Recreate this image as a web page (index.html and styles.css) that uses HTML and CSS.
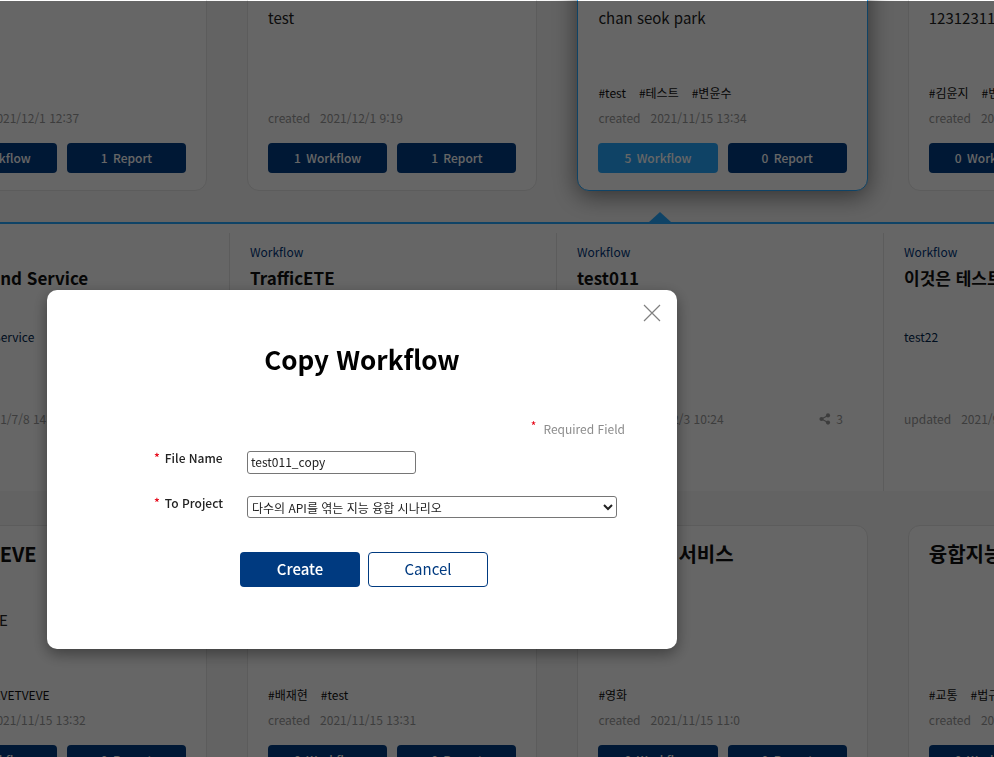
FILE: index.html
```html
<!DOCTYPE html>
<html lang="ko">
<head>
    <meta charset="UTF-8">
    <meta name="viewport" content="width=device-width, initial-scale=1.0">
    <title>Copy Workflow</title>
    <link rel="stylesheet" href="styles.css">
</head>
<body>

    <div class="page">
        <!-- first row of projects, scrolled past the top -->
        <div class="card-row card-row-top">
            <div class="card">
                <h3 class="card-title"></h3>
                <p class="card-desc">test1231</p>
                <div class="card-tags"></div>
                <p class="card-date"><span>created</span>2021/12/1 12:37</p>
                <div class="card-btns">
                    <a class="btn">1 Workflow</a>
                    <a class="btn">1 Report</a>
                </div>
            </div>
            <div class="card">
                <h3 class="card-title"></h3>
                <p class="card-desc">test</p>
                <div class="card-tags"></div>
                <p class="card-date"><span>created</span>2021/12/1 9:19</p>
                <div class="card-btns">
                    <a class="btn">1 Workflow</a>
                    <a class="btn">1 Report</a>
                </div>
            </div>
            <div class="card card-active">
                <h3 class="card-title"></h3>
                <p class="card-desc">chan seok park</p>
                <div class="card-tags"><span>#test</span><span>#테스트</span><span>#변윤수</span></div>
                <p class="card-date"><span>created</span>2021/11/15 13:34</p>
                <div class="card-btns">
                    <a class="btn btn-active">5 Workflow</a>
                    <a class="btn">0 Report</a>
                </div>
            </div>
            <div class="card">
                <h3 class="card-title"></h3>
                <p class="card-desc">12312311</p>
                <div class="card-tags"><span>#김윤지</span><span>#변윤수</span></div>
                <p class="card-date"><span>created</span>2021/11/15 13:30</p>
                <div class="card-btns">
                    <a class="btn">0 Workflow</a>
                    <a class="btn">0 Report</a>
                </div>
            </div>
        </div>

        <!-- workflows of the selected project -->
        <div class="panel">
            <div class="panel-arrow"></div>
            <div class="flow">
                <p class="flow-type">Workflow</p>
                <h3 class="flow-title">On Demand Service</h3>
                <p class="flow-desc">On Demand Service</p>
                <div class="flow-date"><p><span>updated</span>2021/7/8 14:20</p></div>
            </div>
            <div class="flow">
                <p class="flow-type">Workflow</p>
                <h3 class="flow-title">TrafficETE</h3>
                <p class="flow-desc"></p>
                <div class="flow-date"><p><span>updated</span>2021/7/8 14:20</p></div>
            </div>
            <div class="flow">
                <p class="flow-type">Workflow</p>
                <h3 class="flow-title">test011</h3>
                <p class="flow-desc"></p>
                <div class="flow-date">
                    <p><span>updated</span>2021/12/3 10:24</p>
                    <p class="flow-share">
                        <svg width="12" height="12" viewBox="0 0 12 12">
                            <path d="M2.5 6 9 2.5M2.5 6 9 9.5" stroke="currentColor" stroke-width="1.2" fill="none"/>
                            <circle cx="2.5" cy="6" r="2.1" fill="currentColor"/>
                            <circle cx="9" cy="2.4" r="2.1" fill="currentColor"/>
                            <circle cx="9" cy="9.6" r="2.1" fill="currentColor"/>
                        </svg>
                        3
                    </p>
                </div>
            </div>
            <div class="flow">
                <p class="flow-type">Workflow</p>
                <h3 class="flow-title">이것은 테스트 입니다</h3>
                <p class="flow-desc">test22</p>
                <div class="flow-date"><p><span>updated</span>2021/9/3 10:24</p></div>
            </div>
        </div>

        <!-- next row of projects -->
        <div class="card-row">
            <div class="card">
                <h3 class="card-title">TVETVEVE</h3>
                <p class="card-desc">TVETVEVE</p>
                <div class="card-tags"><span>#TVEVETVEVETVEVE</span></div>
                <p class="card-date"><span>created</span>2021/11/15 13:32</p>
                <div class="card-btns">
                    <a class="btn">0 Workflow</a>
                    <a class="btn">0 Report</a>
                </div>
            </div>
            <div class="card">
                <h3 class="card-title"></h3>
                <p class="card-desc"></p>
                <div class="card-tags"><span>#배재현</span><span>#test</span></div>
                <p class="card-date"><span>created</span>2021/11/15 13:31</p>
                <div class="card-btns">
                    <a class="btn">0 Workflow</a>
                    <a class="btn">0 Report</a>
                </div>
            </div>
            <div class="card">
                <h3 class="card-title card-title-end">서비스</h3>
                <p class="card-desc"></p>
                <div class="card-tags"><span>#영화</span></div>
                <p class="card-date"><span>created</span>2021/11/15 11:0</p>
                <div class="card-btns">
                    <a class="btn">0 Workflow</a>
                    <a class="btn">0 Report</a>
                </div>
            </div>
            <div class="card">
                <h3 class="card-title">융합지능 서비스</h3>
                <p class="card-desc"></p>
                <div class="card-tags"><span>#교통</span><span>#법규</span></div>
                <p class="card-date"><span>created</span>2021/11/15 11:0</p>
                <div class="card-btns">
                    <a class="btn">0 Workflow</a>
                    <a class="btn">0 Report</a>
                </div>
            </div>
        </div>
    </div>

    <div class="overlay"></div>

    <div class="modal">
        <button class="modal-close" type="button" aria-label="close">
            <svg width="18" height="18" viewBox="0 0 18 18">
                <path d="M1 1 17 17M17 1 1 17" stroke="#808080" stroke-width="1.2" fill="none"/>
            </svg>
        </button>
        <h2 class="modal-title">Copy Workflow</h2>
        <p class="required"><i>*</i>Required Field</p>
        <form class="modal-form">
            <div class="form-row">
                <label for="fileName"><i>*</i>File Name</label>
                <input type="text" id="fileName" value="test011_copy">
            </div>
            <div class="form-row">
                <label for="toProject"><i>*</i>To Project</label>
                <select id="toProject">
                    <option>다수의 API를 엮는 지능 융합 시나리오</option>
                </select>
            </div>
            <div class="modal-btns">
                <button type="button" class="btn-create">Create</button>
                <button type="button" class="btn-cancel">Cancel</button>
            </div>
        </form>
    </div>

</body>
</html>
```

FILE: styles.css
```css
* {
    box-sizing: border-box;
}
html, body {
    margin: 0;
    height: 757px;
    overflow: hidden;
}
body {
    font-family: "Noto Sans CJK KR", "Noto Sans", sans-serif;
    color: #222;
    background-color: #f8f8f8;
}
p, h2, h3 {
    margin: 0;
}
.page {
    width: 1400px;
}

/* project cards */
.card-row {
    display: flex;
    gap: 40px;
    margin-left: -83.4px;
}
.card-row-top {
    margin-top: -77px;
    margin-bottom: 31px;
}
.card {
    flex: 0 0 290.4px;
    height: 268px;
    padding: 0 20px;
    background-color: #fff;
    border: 1px solid #e6e6e6;
    border-radius: 12px;
}
.card-active {
    border-color: #26a9ff;
    box-shadow: 0 5px 25px rgba(0, 0, 0, 0.5);
}
.card-title {
    height: 82px;
    padding-top: 13px;
    font-size: 20px;
    line-height: 30px;
    font-weight: 700;
    white-space: nowrap;
    color: #111;
}
.card-title-end {
    margin-left: 80px;
}
.card-desc {
    height: 77px;
    font-size: 15px;
    line-height: 24px;
    color: #222;
    white-space: nowrap;
}
.card-tags {
    display: flex;
    gap: 13px;
    height: 22px;
    font-size: 12px;
    line-height: 20px;
    color: #111;
    white-space: nowrap;
}
.card-date {
    margin-top: 3px;
    height: 35px;
    font-size: 12px;
    line-height: 20px;
    color: #999;
    white-space: nowrap;
}
.card-date span, .flow-date span {
    margin-right: 10px;
}
.card-btns {
    display: flex;
    gap: 10px;
}
.btn {
    flex: 1;
    height: 30px;
    line-height: 30px;
    text-align: center;
    font-size: 12px;
    word-spacing: 2px;
    font-weight: 500;
    color: #fff;
    background-color: #003d85;
    border-radius: 4px;
}
.btn-active {
    background-color: #26a9ff;
}

/* workflow list under the selected card */
.panel {
    position: relative;
    display: flex;
    height: 269px;
    margin-bottom: 34px;
    margin-left: -97px;
    padding-top: 9px;
    background-color: #fff;
    border-top: 2px solid #26a9ff;
}
.panel-arrow {
    position: absolute;
    left: 746px;
    top: -12px;
    width: 0;
    height: 0;
    border-left: 11px solid transparent;
    border-right: 11px solid transparent;
    border-bottom: 10px solid #26a9ff;
}
.flow {
    flex: 0 0 327px;
    padding: 9px 21px 0 20px;
    border-right: 1px solid #e6e6e6;
}
.flow-type {
    height: 20px;
    font-size: 12px;
    line-height: 20px;
    color: #00367c;
}
.flow-title {
    margin-top: 3px;
    height: 30px;
    font-size: 17px;
    line-height: 26px;
    font-weight: 700;
    color: #111;
    white-space: nowrap;
}
.flow-desc {
    margin-top: 32px;
    height: 72px;
    font-size: 12px;
    line-height: 20px;
    color: #00264f;
    white-space: nowrap;
}
.flow-date {
    display: flex;
    justify-content: space-between;
    margin-top: 10px;
    padding-right: 19px;
    font-size: 12px;
    line-height: 20px;
    color: #999;
    white-space: nowrap;
}
.flow-share {
    display: flex;
    align-items: center;
    gap: 5px;
}

/* dim layer and dialog */
.overlay {
    position: fixed;
    inset: 1px 0 0 0;
    background-color: rgba(0, 0, 0, 0.6);
}
.modal {
    position: fixed;
    left: 47px;
    top: 290px;
    width: 630px;
    height: 359px;
    padding-top: 51px;
    background-color: #fff;
    border-radius: 10px;
    box-shadow: 0 5px 15px rgba(0, 0, 0, 0.4);
}
.modal-close {
    position: absolute;
    right: 16px;
    top: 14px;
    padding: 0;
    width: 18px;
    height: 18px;
    background: none;
    border: none;
}
.modal-title {
    text-align: center;
    font-size: 26px;
    line-height: 36px;
    font-weight: 700;
    color: #000;
}
.required {
    margin-top: 42px;
    padding-right: 52px;
    text-align: right;
    font-size: 12px;
    line-height: 20px;
    color: #8c8c8c;
}
.required i, .form-row i {
    font-style: normal;
    color: #e60012;
    position: relative;
}
.required i {
    top: -3px;
    margin-right: 7px;
}
.form-row i {
    top: -1px;
    margin-right: 5px;
}
.modal-form {
    margin-top: 12px;
}
.form-row {
    display: flex;
    align-items: flex-start;
    margin-bottom: 22px;
    padding-left: 107px;
}
.form-row label {
    width: 93px;
    font-size: 12px;
    line-height: 14px;
    font-weight: 500;
    color: #222;
}
.form-row input {
    width: 169px;
    height: 23px;
    padding: 0 3px 2px;
    font-family: inherit;
    font-size: 12px;
    color: #222;
    border: 1px solid #767676;
    border-radius: 3px;
}
.form-row select {
    width: 370px;
    height: 22px;
    font-family: inherit;
    font-size: 12px;
    color: #222;
    background-color: #fff;
    border: 1px solid #767676;
    border-radius: 3px;
}
.modal-btns {
    display: flex;
    gap: 8px;
    margin-top: 34px;
    padding-left: 193px;
}
.modal-btns button {
    width: 120px;
    height: 35px;
    padding: 0 0 2px;
    font-family: inherit;
    font-size: 15px;
    border-radius: 4px;
}
.btn-create {
    font-weight: 500;
    color: #fff;
    background-color: #003a80;
    border: none;
}
.btn-cancel {
    color: #003a80;
    background-color: #fff;
    border: 1px solid #003a80;
}
```
